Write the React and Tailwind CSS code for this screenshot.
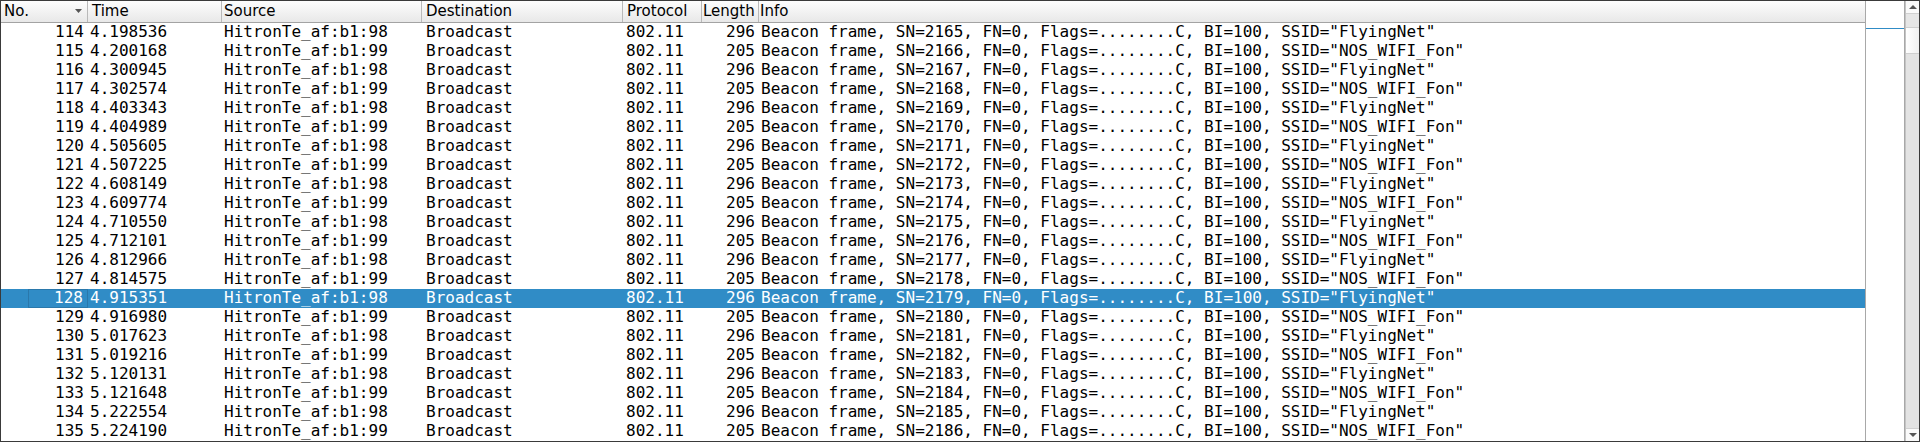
import React from "react";

const times = [
  "4.198536", "4.200168", "4.300945", "4.302574", "4.403343", "4.404989",
  "4.505605", "4.507225", "4.608149", "4.609774", "4.710550", "4.712101",
  "4.812966", "4.814575", "4.915351", "4.916980", "5.017623", "5.019216",
  "5.120131", "5.121648", "5.222554", "5.224190",
];

const packets = times.map((t, i) => {
  const no = 114 + i;
  const even = no % 2 === 0;
  return {
    no,
    time: t,
    src: even ? "HitronTe_af:b1:98" : "HitronTe_af:b1:99",
    dst: "Broadcast",
    proto: "802.11",
    len: even ? 296 : 205,
    info: `Beacon frame, SN=${2165 + i}, FN=0, Flags=........C, BI=100, SSID="${
      even ? "FlyingNet" : "NOS_WIFI_Fon"
    }"`,
  };
});

const SELECTED = 128;

function HeaderCell({ w, children, className = "" }) {
  return (
    <div
      className={`${w} h-full shrink-0 border-r border-[#b9b9b9] flex items-center whitespace-nowrap overflow-hidden ${className}`}
    >
      {children}
    </div>
  );
}

function Row({ p }) {
  const sel = p.no === SELECTED;
  return (
    <div
      className={`flex h-[19px] leading-[17px] whitespace-pre ${
        sel ? "bg-[#308cc6] text-white" : "text-black"
      }`}
    >
      <div className="w-[87px] shrink-0 flex justify-end">
        <div
          className={`w-[60px] h-full text-right pr-[4px] ${
            sel ? "border border-[#2a78ab] leading-[15px]" : ""
          }`}
        >
          {p.no}
        </div>
      </div>
      <div className="w-[134px] shrink-0 pl-[2px]">{p.time}</div>
      <div className="w-[200px] shrink-0 pl-[2px]">{p.src}</div>
      <div className="w-[201px] shrink-0 pl-[4px]">{p.dst}</div>
      <div className="w-[79px] shrink-0 pl-[3px]">{p.proto}</div>
      <div className="w-[57px] shrink-0 text-right pr-[4px]">{p.len}</div>
      <div className="flex-1 pl-[2px] overflow-hidden">{p.info}</div>
    </div>
  );
}

export default function App() {
  return (
    <div className="w-[1920px] h-[442px] bg-white border border-[#3a3a3a] flex overflow-hidden">
      {/* packet list */}
      <div className="w-[1864px] shrink-0 flex flex-col border-r border-[#a8a8a8] box-content">
        <div className="h-[22px] shrink-0 flex border-b border-[#a3a3a3] bg-gradient-to-b from-[#fdfdfd] to-[#e8e8e8] text-[15px] text-black font-['DejaVu_Sans',sans-serif]">
          <HeaderCell w="w-[87px]" className="pl-[3px] justify-between pr-[5px]">
            <span>No.</span>
            <svg width="7" height="4" viewBox="0 0 7 4" className="mb-[1px]">
              <path d="M0 0 H7 L3.5 4 Z" fill="#555" />
            </svg>
          </HeaderCell>
          <HeaderCell w="w-[134px]" className="pl-[4px]">Time</HeaderCell>
          <HeaderCell w="w-[200px]" className="pl-[2px]">Source</HeaderCell>
          <HeaderCell w="w-[201px]" className="pl-[4px]">Destination</HeaderCell>
          <HeaderCell w="w-[79px]" className="pl-[4px]">Protocol</HeaderCell>
          <HeaderCell w="w-[57px]" className="pl-[1px]">Length</HeaderCell>
          <div className="flex-1 h-full flex items-center pl-[1px]">Info</div>
        </div>
        <div className="flex-1 overflow-hidden text-[16px] font-['DejaVu_Sans_Mono',monospace]">
          {packets.map((p) => (
            <Row key={p.no} p={p} />
          ))}
        </div>
      </div>

      {/* minimap */}
      <div className="w-[38px] shrink-0 bg-white border-r border-[#a8a8a8] box-content pt-[27px]">
        <div className="h-[1px] bg-[#308cc6]" />
      </div>

      {/* scrollbar */}
      <div className="w-[14px] shrink-0 flex flex-col bg-[#e3e3e3] border-l border-[#c4c4c4]">
        <div className="h-[13px] shrink-0 bg-[#fafafa] flex items-center justify-center border-b border-[#d0d0d0]">
          <svg width="8" height="4" viewBox="0 0 8 4">
            <path d="M0 4 H8 L4 0 Z" fill="#555" />
          </svg>
        </div>
        <div className="h-[13px] shrink-0 bg-[#e6e6e6]" />
        <div className="h-[27px] shrink-0 bg-gradient-to-r from-[#ffffff] to-[#f0f0f0] border-y border-[#cfcfcf]" />
        <div className="flex-1" />
        <div className="h-[13px] shrink-0 bg-[#fafafa] flex items-center justify-center border-t border-[#d0d0d0]">
          <svg width="8" height="4" viewBox="0 0 8 4">
            <path d="M0 0 H8 L4 4 Z" fill="#555" />
          </svg>
        </div>
      </div>
    </div>
  );
}
